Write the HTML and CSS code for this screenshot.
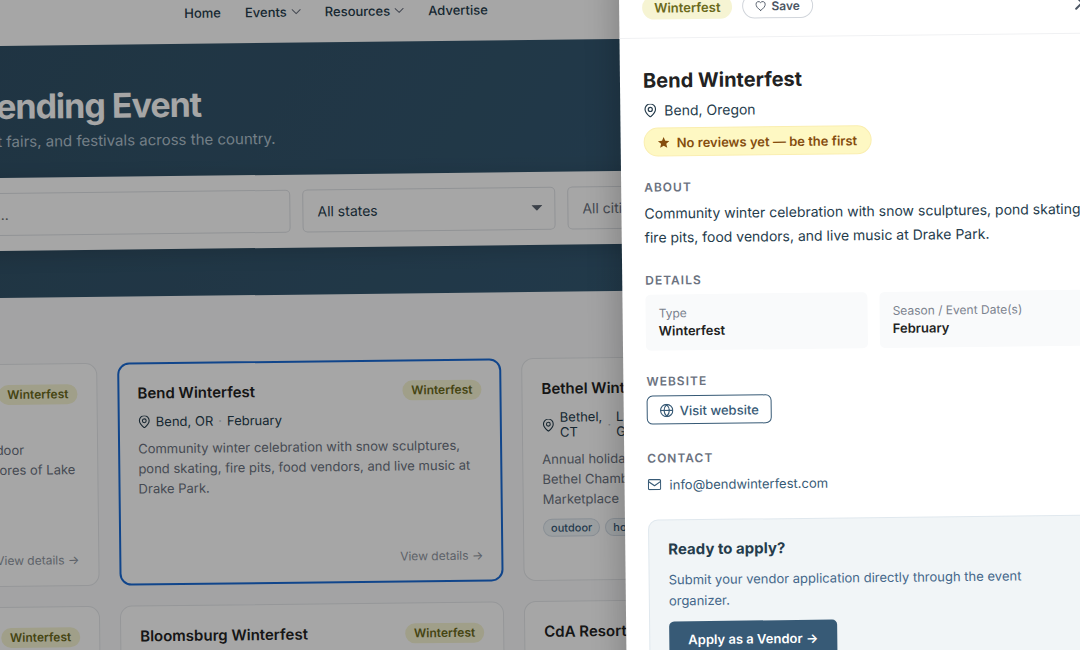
FILE: index.html
```html
<!DOCTYPE html>
<html lang="en">
<head>
  <meta charset="UTF-8">
  <meta name="viewport" content="width=device-width, initial-scale=1.0">
  <title>Vending Events</title>
  <link rel="stylesheet" href="styles.css">
</head>
<body>
  <!-- Shared icons -->
  <svg width="0" height="0" class="icon-defs">
    <symbol id="icon-pin" viewBox="0 0 24 24"><path d="M12 23s9-7 9-13.500a9 9 0 0 0-18 0C3 16 12 23 12 23z"/><circle cx="12" cy="10" r="3.500"/></symbol>
    <symbol id="icon-chevron" viewBox="0 0 10 6"><path d="M1 1l4 4 4-4"/></symbol>
    <symbol id="icon-heart" viewBox="0 0 24 24"><path d="M12 22C5 17 2 13 2 8.500A5.500 5.500 0 0 1 12 5a5.500 5.500 0 0 1 10 3.500C22 13 19 17 12 22z"/></symbol>
    <symbol id="icon-globe" viewBox="0 0 24 24"><circle cx="12" cy="12" r="10.500"/><path d="M2 12h20M12 2c-6 6-6 14 0 20M12 2c6 6 6 14 0 20"/></symbol>
    <symbol id="icon-mail" viewBox="0 0 24 20"><rect x="1.500" y="1.500" width="21" height="17" rx="2"/><path d="M2 5l10 7 10-7"/></symbol>
    <symbol id="icon-star" viewBox="0 0 24 24"><path d="M12 1l3.200 7.500 8.300.7-6.300 5.400 1.900 8.100L12 18.500l-7.100 4.200 1.900-8.100L.5 9.200l8.300-.7z"/></symbol>
  </svg>

  <div class="page">
    <header class="topbar">
      <nav class="nav">
        <a href="#">Home</a>
        <a href="#">Events <svg class="chevron"><use href="#icon-chevron"/></svg></a>
        <a href="#">Resources <svg class="chevron"><use href="#icon-chevron"/></svg></a>
        <a href="#">Advertise</a>
      </nav>
    </header>

    <section class="hero">
      <div class="hero-copy">
        <h1>Find Your Next Vending Event</h1>
        <p>Browse craft fairs, and festivals across the country.</p>
      </div>
      <form class="search">
        <input type="text" aria-label="Search events" placeholder="Search events, markets, or all categories...">
        <div class="select-wrap">
          <select aria-label="State"><option>All states</option></select>
          <svg class="caret" viewBox="0 0 12 6"><path d="M0 0h12L6 6z"/></svg>
        </div>
        <div class="select-wrap">
          <select aria-label="City" disabled><option>All cities</option></select>
        </div>
      </form>
    </section>

    <main class="grid">
      <article class="card">
        <div class="card-head"><h2>Lake Winterfest</h2><span class="badge">Winterfest</span></div>
        <div class="meta"><svg class="pin"><use href="#icon-pin"/></svg><span>Lake City</span></div>
        <p class="desc">Snow, live music, crafts plus food in an outdoor<br>winter villages set right along the scenic shores of Lake</p>
        <a class="details-link" href="#">View details →</a>
      </article>

      <article class="card selected">
        <div class="card-head"><h2>Bend Winterfest</h2><span class="badge">Winterfest</span></div>
        <div class="meta"><svg class="pin"><use href="#icon-pin"/></svg><span>Bend, OR</span><i class="dot">·</i><span>February</span></div>
        <p class="desc">Community winter celebration with snow sculptures, pond skating, fire pits, food vendors, and live music at Drake Park.</p>
        <a class="details-link" href="#">View details →</a>
      </article>

      <article class="card">
        <div class="card-head"><h2>Bethel Winterfest</h2></div>
        <div class="meta"><svg class="pin"><use href="#icon-pin"/></svg><span>Bethel,<br>CT</span><i class="dot">·</i><span>L<br>G</span></div>
        <p class="desc">Annual holiday<br>Bethel Chamber<br>Marketplace</p>
        <div class="tags"><span>outdoor</span><span>holiday</span></div>
      </article>

      <article class="card">
        <div class="card-head"><h2>Winterfest</h2><span class="badge">Winterfest</span></div>
      </article>
      <article class="card">
        <div class="card-head"><h2>Bloomsburg Winterfest</h2><span class="badge">Winterfest</span></div>
      </article>
      <article class="card">
        <div class="card-head"><h2>CdA Resort</h2></div>
      </article>
    </main>

    <div class="overlay"></div>

    <aside class="drawer" aria-label="Event details">
      <div class="drawer-head">
        <span class="badge large">Winterfest</span>
        <button class="save" type="button"><svg><use href="#icon-heart"/></svg>Save</button>
        <button class="close" type="button" aria-label="Close"><svg viewBox="0 0 12 12"><path d="M0 0l12 12M12 0L0 12"/></svg></button>
      </div>
      <div class="drawer-body">
        <h2>Bend Winterfest</h2>
        <div class="location"><svg class="pin"><use href="#icon-pin"/></svg>Bend, Oregon</div>
        <button class="reviews" type="button"><svg><use href="#icon-star"/></svg>No reviews yet — be the first</button>

        <h3>About</h3>
        <p class="about">Community winter celebration with snow sculptures, pond skating, fire pits, food vendors, and live music at Drake Park.</p>

        <h3>Details</h3>
        <dl class="facts">
          <div><dt>Type</dt><dd>Winterfest</dd></div>
          <div><dt>Season / Event Date(s)</dt><dd>February</dd></div>
        </dl>

        <h3>Website</h3>
        <a class="visit" href="#"><svg><use href="#icon-globe"/></svg>Visit website</a>

        <h3>Contact</h3>
        <a class="email" href="#"><svg><use href="#icon-mail"/></svg>info@bendwinterfest.com</a>

        <div class="apply">
          <h4>Ready to apply?</h4>
          <p>Submit your vendor application directly through the event organizer.</p>
          <button type="button">Apply as a Vendor →</button>
        </div>
      </div>
    </aside>
  </div>
</body>
</html>
```
FILE: styles.css
```css
* {
  box-sizing: border-box;
}

body {
  margin: 0;
  height: 100vh;
  overflow: hidden;
  background: #a3a3a3;
  font-family: Inter, "Liberation Sans", sans-serif;
  color: #253c4c;
}

h1, h2, h3, h4, p, dl, dd {
  margin: 0;
}

a {
  text-decoration: none;
  color: inherit;
}

button, input, select {
  font-family: inherit;
}

svg {
  fill: none;
  stroke: currentColor;
  stroke-width: 2;
  stroke-linecap: round;
  stroke-linejoin: round;
  flex: none;
}

.icon-defs {
  position: absolute;
}

/* The whole board is tilted slightly and runs off the left side */
.page {
  position: relative;
  margin-left: -310px;
  width: calc(100% + 420px);
  min-height: 110vh;
  padding-bottom: 20px;
  background: #fafbfc;
  transform: rotate(-0.65deg);
  transform-origin: 310px 0;
}

/* Header */
.topbar {
  height: 46px;
  background: #fff;
}

.nav {
  display: flex;
  gap: 24px;
  padding: 5px 0 0 494px;
  font-size: 13px;
  line-height: 20px;
  font-weight: 500;
}

.nav a {
  display: flex;
  align-items: center;
  gap: 4px;
}

.chevron {
  width: 10px;
  height: 6px;
  stroke-width: 1;
  color: #6b7280;
}

/* Hero */
.hero {
  height: 252px;
  padding-top: 40px;
  background: linear-gradient(120deg, #304e62, #375e7a);
}

.hero-copy {
  width: 510px;
  height: 92px;
  text-align: right;
  white-space: nowrap;
}

.hero h1 {
  font-size: 34px;
  line-height: 42px;
  letter-spacing: -1px;
  color: #fff;
}

.hero p {
  margin: 2px -74px 0 0;
  font-size: 15px;
  line-height: 24px;
  color: #b4c4d0;
}

.search {
  display: grid;
  grid-template-columns: 578px 253px 253px;
  gap: 12px;
  padding: 15px 20px;
  background: #fff;
  box-shadow: 0 4px 20px rgba(0, 0, 0, 0.15);
}

.search input,
.search select {
  width: 100%;
  height: 43px;
  padding: 0 14px;
  border: 1px solid #dfe2e6;
  border-radius: 5px;
  background: #fff;
  color: #253c4c;
  font-size: 14px;
}

.search select {
  appearance: none;
  opacity: 1;
}

.search select:disabled {
  color: #6b7280;
}

.select-wrap {
  position: relative;
}

.caret {
  position: absolute;
  top: 18px;
  right: 13px;
  width: 11px;
  height: 6px;
  fill: #5b6470;
  stroke: none;
}

/* Cards */
.grid {
  display: grid;
  grid-template-columns: repeat(3, 1fr);
  grid-auto-rows: 223px;
  gap: 20px;
  padding: 66px 289px 0 19px;
}

.card {
  display: flex;
  flex-direction: column;
  padding: 18px 19px 15px;
  border: 1px solid #e6e8eb;
  border-radius: 12px;
  background: #fff;
}

.card.selected {
  padding: 17px 18px 14px;
  border: 2px solid #1a6bd6;
}

.card-head {
  display: flex;
  justify-content: space-between;
  align-items: center;
  height: 24px;
}

.card h2 {
  font-size: 15px;
  line-height: 22px;
  font-weight: 600;
  color: #222;
  white-space: nowrap;
}

.badge {
  padding: 0 9px;
  border-radius: 12px;
  background: #f6f4d3;
  color: #6b6a1c;
  font-size: 12px;
  line-height: 20px;
  font-weight: 600;
}

.badge.large {
  padding: 0 12px;
  font-size: 13px;
  line-height: 24px;
}

.meta {
  display: flex;
  align-items: center;
  gap: 5px;
  margin-top: 9px;
  font-size: 13px;
  line-height: 15px;
}

.pin {
  width: 13px;
  height: 13px;
}

.dot {
  color: #b6bcc4;
  font-style: normal;
}

.desc {
  margin-top: 9px;
  font-size: 13px;
  line-height: 20px;
  color: #6b7280;
}

.tags {
  display: flex;
  gap: 5px;
  margin-top: 10px;
}

.tags span {
  padding: 0 7px;
  border: 1px solid #d3dce5;
  border-radius: 10px;
  background: #eff4f8;
  color: #375a76;
  font-size: 11px;
  line-height: 16px;
  font-weight: 500;
}

.details-link {
  margin-top: auto;
  text-align: right;
  font-size: 12px;
  line-height: 20px;
  color: #8f96a1;
}

.overlay {
  position: absolute;
  inset: 0;
  background: rgba(0, 0, 0, 0.35);
}

/* Drawer */
.drawer {
  position: absolute;
  top: -20px;
  bottom: 0;
  left: 929px;
  width: 504px;
  padding-top: 20px;
  background: #fff;
  box-shadow: -6px 0 30px rgba(0, 0, 0, 0.2);
}

.drawer-head {
  display: flex;
  align-items: center;
  gap: 10px;
  height: 46px;
  padding: 0 26px 16px 23px;
  border-bottom: 1px solid #f0f1f3;
}

.save {
  display: flex;
  align-items: center;
  gap: 5px;
  height: 25px;
  padding: 0 12px;
  border: 1px solid #d1d5db;
  border-radius: 13px;
  background: #fff;
  color: #4b5563;
  font-size: 12px;
  font-weight: 600;
}

.save svg {
  width: 11px;
  height: 11px;
}

.close {
  display: flex;
  justify-content: center;
  width: 30px;
  margin-left: auto;
  padding: 0;
  border: 0;
  background: none;
  color: #4b5563;
}

.close svg {
  width: 12px;
  height: 12px;
  stroke-width: 2;
  overflow: visible;
}

.drawer-body {
  padding: 28px 25px 0 23px;
}

.drawer-body h2 {
  font-size: 20px;
  line-height: 28px;
  color: #222;
}

.location {
  display: flex;
  align-items: center;
  gap: 7px;
  margin-top: 6px;
  font-size: 14px;
  line-height: 20px;
}

.location .pin {
  width: 14px;
  height: 14px;
}

.reviews {
  display: flex;
  align-items: center;
  gap: 7px;
  height: 29px;
  margin-top: 7px;
  padding: 0 13px;
  border: 1px solid #faeeb0;
  border-radius: 15px;
  background: #fef8c3;
  color: #854d0e;
  font-size: 13px;
  font-weight: 600;
}

.reviews svg {
  width: 12px;
  height: 12px;
  fill: currentColor;
  stroke: none;
}

.drawer-body h3 {
  margin-top: 23px;
  font-size: 12px;
  line-height: 16px;
  letter-spacing: 1px;
  font-weight: 600;
  text-transform: uppercase;
  color: #6b7280;
}

.about {
  margin-top: 6px;
  font-size: 14px;
  line-height: 24px;
}

.facts {
  display: grid;
  grid-template-columns: 1fr 1fr;
  gap: 12px;
  margin-top: 6px;
}

.facts div {
  height: 56px;
  padding: 10px 13px;
  border-radius: 5px;
  background: #f9fafb;
}

.facts dt {
  font-size: 12px;
  line-height: 17px;
  color: #7b828e;
}

.facts dd {
  font-size: 13px;
  line-height: 18px;
  font-weight: 600;
  color: #222;
}

.visit {
  display: flex;
  align-items: center;
  gap: 6px;
  width: max-content;
  height: 29px;
  margin: 6px 0 26px;
  padding: 0 12px;
  border: 1px solid #375a76;
  border-radius: 6px;
  color: #375a76;
  font-size: 13px;
  font-weight: 500;
}

.visit svg {
  width: 14px;
  height: 14px;
}

.email {
  display: flex;
  align-items: center;
  gap: 8px;
  margin-top: 8px;
  font-size: 13px;
  line-height: 20px;
  color: #375a76;
}

.email svg {
  width: 14px;
  height: 12px;
}

.apply {
  margin-top: 25px;
  padding: 18px 19px;
  border: 1px solid #e0e8ee;
  border-radius: 10px;
  background: #f1f5f7;
}

.apply h4 {
  font-size: 15px;
  line-height: 22px;
}

.apply p {
  margin: 9px 0 10px;
  font-size: 13px;
  line-height: 21px;
  color: #44678a;
}

.apply button {
  height: 36px;
  padding: 0 19px;
  border: 0;
  border-radius: 5px;
  background: #375a76;
  color: #fff;
  font-size: 13px;
  font-weight: 600;
}
```
